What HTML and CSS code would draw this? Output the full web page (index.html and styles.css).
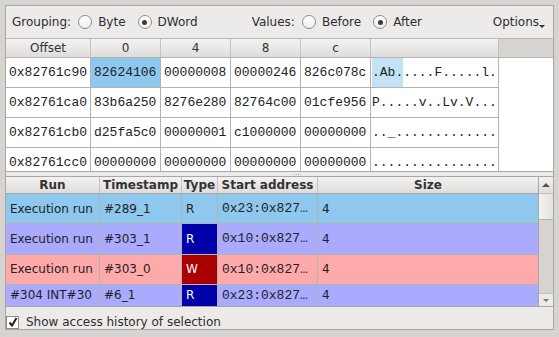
FILE: index.html
```html
<!DOCTYPE html>
<html>
    <head>
        <title>Memory view</title>
        <link rel="stylesheet" href="styles.css">
    </head>
    <body>
        <div class="panel">
            <div class="toolbar">
                <span class="label">Grouping:</span>
                <span class="radio"></span><span class="opt">Byte</span>
                <span class="radio checked"></span><span class="opt">DWord</span>
                <span class="label values">Values:</span>
                <span class="radio"></span><span class="opt">Before</span>
                <span class="radio checked"></span><span class="opt">After</span>
                <span class="options">Options<span class="arrow"></span></span>
            </div>

            <div class="hexview">
                <table class="hex">
                    <tr class="head">
                        <th class="c-off">Offset</th><th class="c-w">0</th><th class="c-w">4</th><th class="c-w">8</th><th class="c-w">c</th><th class="c-asc"></th><th class="c-fill"></th>
                    </tr>
                    <tr>
                        <td>0x82761c90</td><td class="sel">82624106</td><td>00000008</td><td>00000246</td><td>826c078c</td><td class="asc"><span class="sel-lite">.Ab.</span>....F.....l.</td><td class="fill"></td>
                    </tr>
                    <tr>
                        <td>0x82761ca0</td><td>83b6a250</td><td>8276e280</td><td>82764c00</td><td>01cfe956</td><td class="asc">P.....v..Lv.V...</td><td class="fill"></td>
                    </tr>
                    <tr>
                        <td>0x82761cb0</td><td>d25fa5c0</td><td>00000001</td><td>c1000000</td><td>00000000</td><td class="asc">.._.............</td><td class="fill"></td>
                    </tr>
                    <tr>
                        <td>0x82761cc0</td><td>00000000</td><td>00000000</td><td>00000000</td><td>00000000</td><td class="asc">................</td><td class="fill"></td>
                    </tr>
                </table>
            </div>

            <div class="splitter"><span class="grip"></span></div>

            <div class="history">
                <table class="runs">
                    <tr class="head">
                        <th class="c-run">Run</th><th class="c-ts">Timestamp</th><th class="c-type">Type</th><th class="c-addr">Start address</th><th>Size</th>
                    </tr>
                    <tr class="blue">
                        <td>Execution run</td><td>#289_1</td><td>R</td><td class="mono">0x23:0x827…</td><td>4</td>
                    </tr>
                    <tr class="violet">
                        <td>Execution run</td><td>#303_1</td><td class="read">R</td><td class="mono">0x10:0x827…</td><td>4</td>
                    </tr>
                    <tr class="pink">
                        <td>Execution run</td><td>#303_0</td><td class="write">W</td><td class="mono">0x10:0x827…</td><td>4</td>
                    </tr>
                    <tr class="violet last">
                        <td>#304 INT#30</td><td>#6_1</td><td class="read">R</td><td class="mono">0x23:0x827…</td><td>4</td>
                    </tr>
                </table>
                <div class="scrollbar">
                    <div class="sb-btn up"><span class="tri-up"></span></div>
                    <div class="sb-thumb"></div>
                    <div class="sb-track"></div>
                    <div class="sb-btn down"><span class="tri-down"></span></div>
                </div>
            </div>

            <div class="footer">
                <span class="check">
                    <svg width="10" height="10" viewBox="0 0 10 10"><path d="M1.5 5.5 L4 8.5 L8.5 1" fill="none" stroke="#222" stroke-width="2"/></svg>
                </span>
                <span class="opt">Show access history of selection</span>
            </div>
        </div>
    </body>
</html>
```
FILE: styles.css
```css
html, body {
    margin: 0;
    padding: 0;
}
body {
    background: #d6d3d0;
    font-family: "DejaVu Sans", sans-serif;
    font-size: 12px;
    color: #2e2e2e;
    padding: 5px 5px 7px 5px;
    width: 549px;
}
.panel {
    width: 547px;
    height: 323px;
    border: 1px solid #a9a7a5;
    background: #ecebe9;
    display: flex;
    flex-direction: column;
}

/* toolbar */
.toolbar {
    height: 32px;
    display: flex;
    align-items: center;
    padding-left: 6px;
}
.label {
    margin-right: 7px;
}
.values {
    margin-left: 42px;
}
.radio {
    width: 12px;
    height: 12px;
    border: 1px solid #8f8c89;
    border-radius: 50%;
    background: linear-gradient(#ffffff, #f1f0ef);
    position: relative;
    margin-right: 6px;
}
.radio.checked::after {
    content: "";
    position: absolute;
    left: 3.5px;
    top: 3.5px;
    width: 5px;
    height: 5px;
    border-radius: 50%;
    background: #3a3a3a;
}
.opt {
    margin-right: 12px;
}
.options {
    margin-left: auto;
    margin-right: 14px;
    position: relative;
}
.arrow {
    position: absolute;
    right: -6px;
    bottom: 1px;
    border-left: 3px solid transparent;
    border-right: 3px solid transparent;
    border-top: 3px solid #333;
}

/* hex grid */
.hexview {
    height: 132px;
    background: #fff;
    border-top: 1px solid #b9b7b5;
    border-bottom: 1px solid #a9a7a5;
    overflow: hidden;
}
table {
    border-collapse: collapse;
    table-layout: fixed;
}
.hex {
    width: 547px;
}
.hex th {
    height: 18px;
    padding: 0;
    font-weight: normal;
    background: linear-gradient(#f3f2f1, #dfdddb);
    border-right: 1px solid #c4c2c0;
    border-bottom: 1px solid #b5b3b1;
    color: #333;
}
.hex th.c-fill {
    background: #d6d3d0;
    border-right: none;
}
.c-off { width: 84px; }
.c-w { width: 69px; }
.c-asc { width: 127px; }
.hex td {
    height: 29px;
    padding: 0 0 0 3px;
    font-family: "Liberation Mono", monospace;
    font-size: 13px;
    color: #222;
    border-right: 1px solid #b5b3b1;
    border-bottom: 1px solid #b5b3b1;
    white-space: nowrap;
    overflow: hidden;
}
.hex td.asc {
    padding-left: 1px;
}
.hex td.fill {
    border: none;
}
.hex td.sel {
    background: #8fc8ee;
}
.sel-lite {
    background: #c4e2f6;
    display: inline-block;
    line-height: 29px;
}

/* splitter */
.splitter {
    height: 4px;
    display: flex;
    justify-content: center;
    align-items: center;
}
.grip {
    width: 7px;
    border-top: 1px dotted #b5b3b1;
    margin-left: 36px;
}

/* access history */
.history {
    height: 129px;
    display: flex;
    border-top: 1px solid #a9a7a5;
    border-bottom: 1px solid #a9a7a5;
    overflow: hidden;
}
.runs {
    width: 534px;
}
.runs th {
    height: 16px;
    padding: 0;
    font-weight: bold;
    color: #333;
    background: linear-gradient(#f3f2f1, #dfdddb);
    border-right: 1px solid #c4c2c0;
    border-bottom: 1px solid #a9a7a5;
}
.c-run { width: 93px; }
.c-ts { width: 81px; }
.c-type { width: 35px; }
.c-addr { width: 99px; }
.runs td {
    height: 29px;
    padding: 0 0 0 4px;
    color: #222;
    border-right: 1px solid #b5b3b1;
    border-bottom: 1px solid #b5b3b1;
    white-space: nowrap;
    overflow: hidden;
}
.runs td.mono {
    font-family: "Liberation Mono", monospace;
    font-size: 13px;
}
.runs tr.last td {
    height: 21px;
    border-bottom: none;
}
.blue td { background: #8fc8ee; }
.violet td { background: #aaaaff; }
.pink td { background: #ffaaaa; }
.runs td.read {
    background: #0000aa;
    color: #fff;
}
.runs td.write {
    background: #aa0000;
    color: #fff;
}

.scrollbar {
    width: 14px;
    margin-left: -1px;
    border-left: 1px solid #a9a7a5;
    display: flex;
    flex-direction: column;
    background: #d6d3d0;
}
.sb-btn {
    height: 16px;
    background: linear-gradient(#f3f2f1, #dfdddb);
    display: flex;
    align-items: center;
    justify-content: center;
}
.sb-btn.down {
    height: 12px;
    background: #ecebe9;
    border-top: 1px solid #c4c2c0;
}
.sb-thumb {
    height: 25px;
    background: linear-gradient(90deg, #f4f3f2, #e4e2e0);
    border-top: 1px solid #c4c2c0;
    border-bottom: 1px solid #b5b3b1;
}
.sb-track {
    flex: 1;
}
.tri-up {
    border-left: 4px solid transparent;
    border-right: 4px solid transparent;
    border-bottom: 4px solid #555;
}
.tri-down {
    border-left: 3px solid transparent;
    border-right: 3px solid transparent;
    border-top: 3px solid #777;
}

/* footer */
.footer {
    flex: 1;
    display: flex;
    align-items: center;
    padding-top: 8px;
}
.check {
    width: 11px;
    height: 11px;
    border: 1px solid #8f8c89;
    background: #fff;
    margin-right: 7px;
    display: flex;
    align-items: center;
    justify-content: center;
}
```
